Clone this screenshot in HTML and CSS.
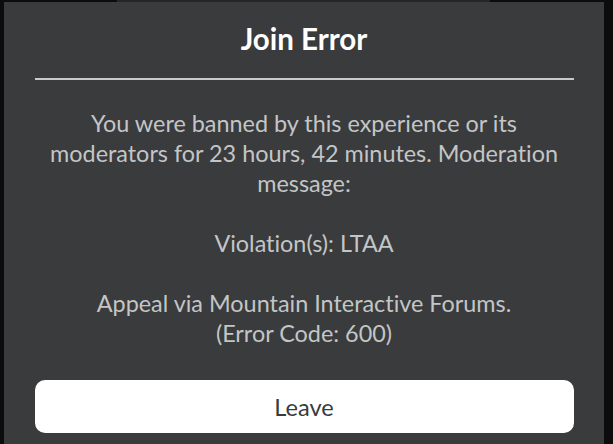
FILE: index.html
```html
<!DOCTYPE html>
<html>
<head>
<meta charset="utf-8">
<link rel="stylesheet" href="styles.css">
</head>
<body>
<div class="scene">
  <div class="topband"></div>
  <div class="dialog">
    <h1 class="title">Join Error</h1>
    <div class="rule"></div>
    <p class="message">You were banned by this experience or its<br>moderators for 23 hours, 42 minutes. Moderation<br>message:<br><br>Violation(s): LTAA<br><br>Appeal via Mountain Interactive Forums.<br>(Error Code: 600)</p>
    <button class="leave">Leave</button>
  </div>
</div>
</body>
</html>
```

FILE: styles.css
```css
html, body {
  margin: 0;
  padding: 0;
  background: #0c0c0c;
  width: 613px;
  height: 444px;
  overflow: hidden;
}

.scene {
  display: flex;
  flex-direction: column;
  height: 444px;
}

.topband {
  height: 2px;
  margin-left: 117px;
  width: 373px;
  background: #262626;
  flex: none;
}

.dialog {
  flex: 1;
  margin-left: 4px;
  width: 600px;
  background: #393b3d;
  display: flex;
  flex-direction: column;
  align-items: center;
  font-family: Lato, "Noto Sans", sans-serif;
  font-variant-ligatures: none;
}

.title {
  margin: 0;
  padding-top: 20px;
  height: 55px;
  box-sizing: border-box;
  font-size: 29.5px;
  line-height: 34px;
  font-weight: 700;
  color: #ffffff;
}

.rule {
  width: 539px;
  height: 2px;
  background: #c9c9c9;
  margin-top: 21px;
}

.message {
  margin: 28px 0 0;
  width: 539px;
  text-align: center;
  font-size: 23.4px;
  line-height: 30px;
  color: #c4c5c6;
}

.leave {
  margin-top: 32px;
  width: 539px;
  height: 53px;
  border: none;
  border-radius: 10px;
  background: #ffffff;
  color: #393b3d;
  font-family: Lato, "Noto Sans", sans-serif;
  font-variant-ligatures: none;
  font-size: 23.6px;
  padding: 0;
}
```
